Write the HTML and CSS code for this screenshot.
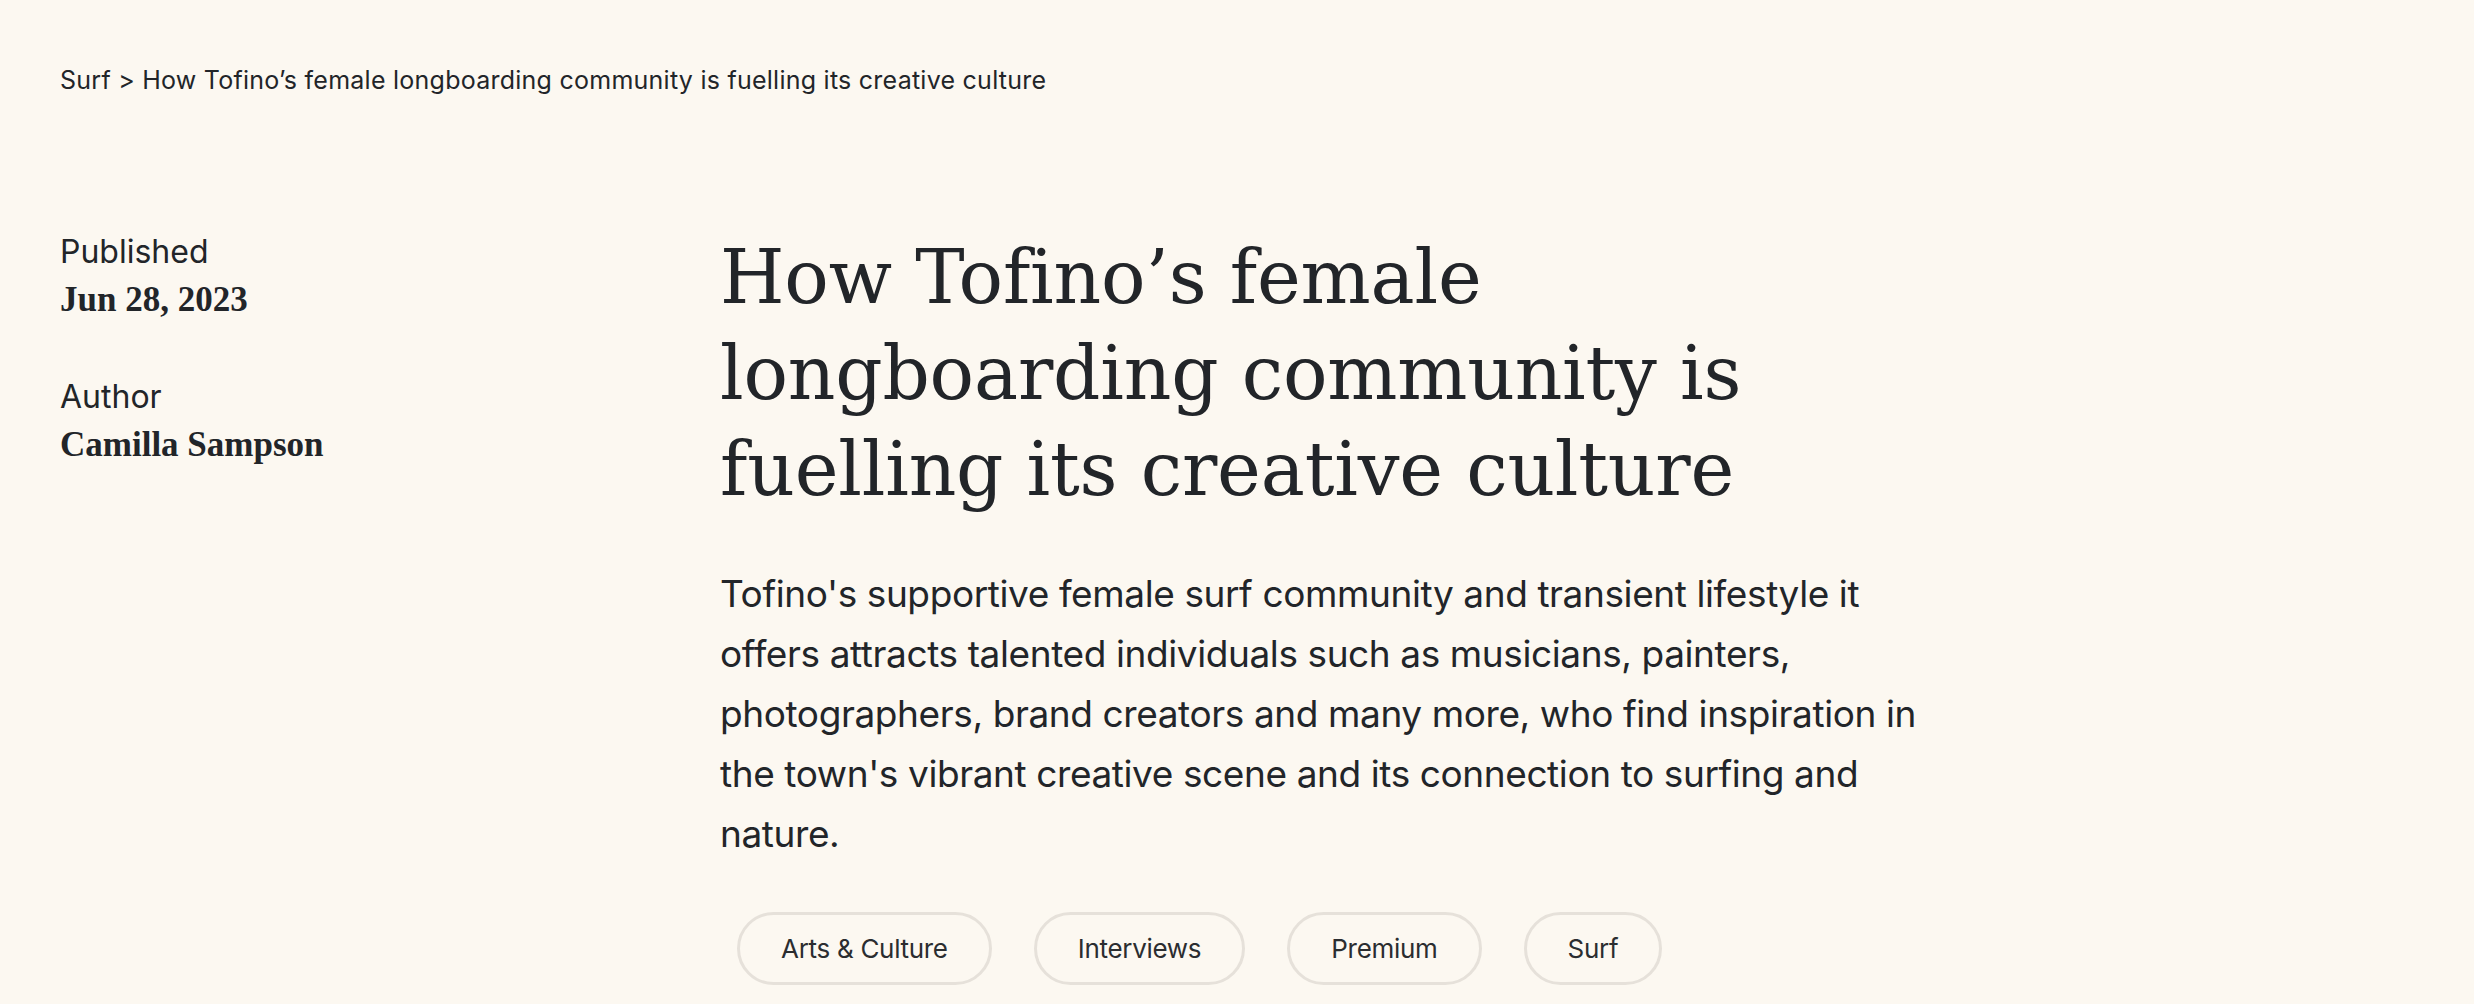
FILE: index.html
```html
<!DOCTYPE html>
<html lang="en">
<head>
<meta charset="utf-8">
<title>How Tofino's female longboarding community is fuelling its creative culture</title>
<link rel="stylesheet" href="styles.css">
</head>
<body>
<nav class="breadcrumb">Surf &gt; How Tofino’s female longboarding community is fuelling its creative culture</nav>
<div class="article">
  <aside class="meta">
    <div class="meta-item">
      <div class="meta-label">Published</div>
      <div class="meta-value">Jun 28, 2023</div>
    </div>
    <div class="meta-item">
      <div class="meta-label">Author</div>
      <div class="meta-value">Camilla Sampson</div>
    </div>
  </aside>
  <main class="main">
    <h1 class="title">How Tofino’s female longboarding community is fuelling its creative culture</h1>
    <p class="lede">Tofino's supportive female surf community and transient lifestyle it offers attracts talented individuals such as musicians, painters, photographers, brand creators and many more, who find inspiration in the town's vibrant creative scene and its connection to surfing and nature.</p>
    <ul class="tags">
      <li class="tag">Arts &amp; Culture</li>
      <li class="tag">Interviews</li>
      <li class="tag">Premium</li>
      <li class="tag">Surf</li>
    </ul>
  </main>
</div>
</body>
</html>
```
FILE: styles.css
```css
html, body {
  margin: 0;
  padding: 0;
  background: #fcf8f1;
  color: #222529;
  font-family: Inter, "Noto Sans", sans-serif;
}

.breadcrumb {
  padding: 62px 60px 0;
  font-size: 25px;
  line-height: 36px;
  letter-spacing: 0.25px;
}

.article {
  display: flex;
  padding: 130px 0 0 60px;
}

.meta {
  width: 660px;
  flex: none;
  display: flex;
  flex-direction: column;
  gap: 49px;
}

.meta-label {
  font-size: 32px;
  line-height: 48px;
}

.meta-value {
  font-family: "Liberation Serif", serif;
  font-weight: 700;
  font-size: 35px;
  line-height: 48px;
}

.main {
  width: 1225px;
}

.title {
  margin: 1px 0 0;
  font-family: "DejaVu Serif", serif;
  font-weight: 400;
  font-size: 74px;
  line-height: 96px;
  max-width: 1150px;
  letter-spacing: -0.2px;
}

.lede {
  margin: 47px 0 0;
  font-size: 37px;
  line-height: 60px;
  letter-spacing: -0.4px;
}

.tags {
  list-style: none;
  display: flex;
  gap: 42px;
  margin: 48px 0 0;
  padding: 0 0 0 17px;
}

.tag {
  border: 3px solid #e6e1da;
  border-radius: 40px;
  padding: 18px 41px;
  font-size: 26px;
  line-height: 31px;
  letter-spacing: -0.3px;
  color: #2b2d30;
}
```
